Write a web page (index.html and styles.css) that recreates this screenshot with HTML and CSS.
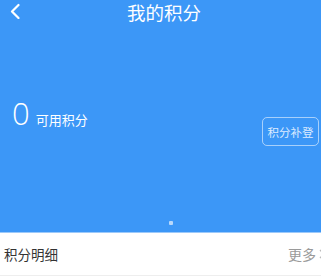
FILE: index.html
```html
<!DOCTYPE html>
<html lang="zh">
<head>
<meta charset="utf-8">
<link rel="stylesheet" href="styles.css">
</head>
<body>
<div class="page">
  <header class="hero">
    <div class="nav">
      <svg class="back" width="12" height="16" viewBox="0 0 12 16"><path d="M9.5 2 L3 8.5 L9.5 15" fill="none" stroke="#fff" stroke-width="2.2" stroke-linecap="round" stroke-linejoin="round"/></svg>
      <div class="title">我的积分</div>
    </div>
    <div class="summary">
      <div class="points"><span class="num">0</span><span class="label">可用积分</span></div>
      <div class="btn">积分补登</div>
    </div>
    <div class="dots"><span class="dot"></span></div>
  </header>
  <div class="row">
    <span class="row-title">积分明细</span>
    <span class="more"><span class="more-text">更多</span><svg class="chev" width="8" height="12" viewBox="0 0 8 12"><path d="M2 2 L6 6 L2 10" fill="none" stroke="#bbb" stroke-width="1.3"/></svg></span>
  </div>
</div>
</body>
</html>
```
FILE: styles.css
```css
html, body { margin: 0; padding: 0; }
body { width: 321px; height: 277px; overflow: hidden; background: #fff;
  font-family: "Noto Sans CJK SC", "Noto Sans", sans-serif; }
.page { width: 321px; }
.hero { background: #3c97f7; height: 233px; display: flex; flex-direction: column; position: relative; border-bottom: 1px solid #9cc9fa; box-sizing: border-box; }
.nav { height: 24px; position: relative; display: flex; align-items: center; justify-content: center; padding-left: 7px; }
.back { position: absolute; left: 9px; top: 3px; }
.title { color: #fff; font-size: 18.5px; line-height: 24px; }
.summary { display: flex; align-items: flex-start; justify-content: space-between; padding-top: 71px; padding-left: 12px; }
.points { display: flex; align-items: baseline; color: #fff; }
.num { font-family: "Open Sans", sans-serif; font-weight: 300; font-size: 31px; line-height: 36px; }
.label { font-size: 13px; margin-left: 6px; }
.btn { margin-top: 22px; margin-right: 2px; width: 55px; height: 27px; border: 1px solid rgba(255,255,255,0.55); border-radius: 5px; color: #dcebff; font-size: 11.5px; display: flex; align-items: center; justify-content: center; }
.dots { position: absolute; left: 169px; top: 221px; }
.dot { display: block; width: 4px; height: 4px; background: #b8d8fb; border-radius: 1px; }
.row { height: 42px; display: flex; align-items: center; justify-content: space-between; padding-left: 4px; border-bottom: 1px solid #eee; margin-right: -5px; }
.row-title { font-size: 13.5px; color: #333; }
.more { display: flex; align-items: center; }
.more-text { font-size: 14px; color: #9a9a9a; }
.chev { margin-left: 2px; }
```
